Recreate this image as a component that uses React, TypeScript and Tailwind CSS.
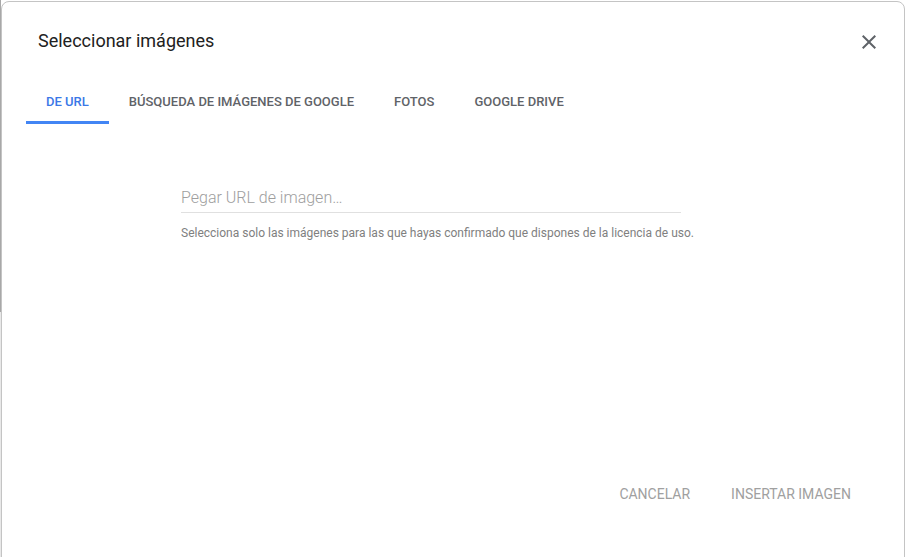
import React from 'react';

const tabs = ['DE URL', 'BÚSQUEDA DE IMÁGENES DE GOOGLE', 'FOTOS', 'GOOGLE DRIVE'];

const CloseIcon: React.FC = () => (
  <svg width="24" height="24" viewBox="0 0 24 24" className="fill-[#5f6368]">
    <path d="M19 6.41L17.59 5 12 10.59 6.41 5 5 6.41 10.59 12 5 17.59 6.41 19 12 13.41 17.59 19 19 17.59 13.41 12z" />
  </svg>
);

const App: React.FC = () => {
  return (
    <div className="flex w-[906px] h-[557px] bg-white overflow-hidden font-['Roboto','Liberation_Sans',sans-serif]">
      {/* backdrop strip on the left */}
      <div className="flex flex-col w-[1px] shrink-0">
        <div className="h-[312px] bg-[#a8a8a8]" />
        <div className="flex-1 bg-[#e8e8e8]" />
      </div>

      {/* Dialog */}
      <div className="flex flex-col w-[904px] h-[560px] mt-[1px] bg-white border border-[#c4c4c4] rounded-t-[8px]">
        {/* Header */}
        <div className="flex items-start justify-between pt-[27px] pl-[36px] pr-[36px]">
          <h1 className="text-[18px] leading-[24px] text-[#212121]">Seleccionar imágenes</h1>
          <button className="mt-[1px] -mr-[13px]">
            <CloseIcon />
          </button>
        </div>

        {/* Tabs */}
        <div className="flex pl-[24px] mt-[28px]">
          {tabs.map((tab, i) => (
            <div
              key={tab}
              className={`px-[20px] h-[42px] flex items-center text-[13px] font-medium border-b-[3px] ${
                i === 0 ? 'text-[#3b78e7] border-[#4285f4]' : 'text-[#5f6368] border-transparent'
              }`}
            >
              <span className="pt-[0px]">{tab}</span>
            </div>
          ))}
        </div>

        {/* URL input */}
        <div className="pl-[179px] mt-[62px]">
          <div className="w-[500px] border-b border-[#e0e0e0] pb-[2px]">
            <input
              className="w-full text-[16px] leading-[22px] font-light text-[#212121] placeholder:text-[#9e9e9e] outline-none"
              placeholder="Pegar URL de imagen…"
            />
          </div>
          <p className="mt-[12px] text-[12px] leading-[16px] text-[#808080]">
            Selecciona solo las imágenes para las que hayas confirmado que dispones de la licencia de uso.
          </p>
        </div>

        {/* Footer buttons */}
        <div className="flex justify-end mt-auto mb-[56px] pr-[53px] gap-[41px] text-[14px] leading-[20px] text-[#a0a0a0]">
          <button>CANCELAR</button>
          <button>INSERTAR IMAGEN</button>
        </div>
      </div>
    </div>
  );
};

export default App;
